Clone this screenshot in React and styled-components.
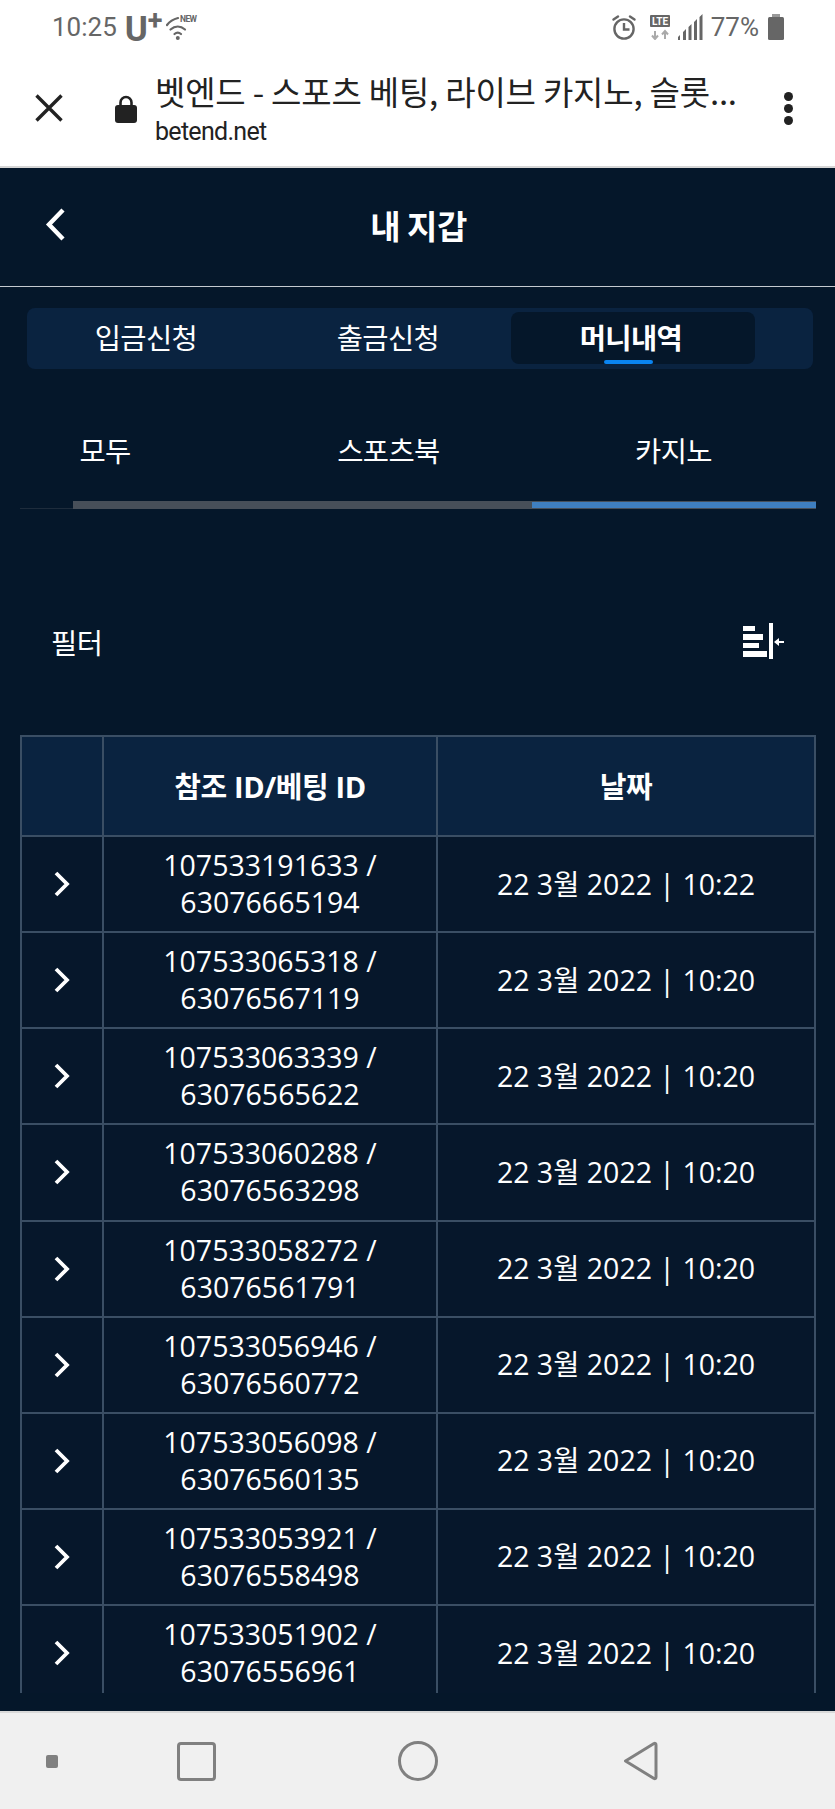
import React from 'react';
import styled, { createGlobalStyle } from 'styled-components';

const Global = createGlobalStyle`
  html, body {
    margin: 0;
    padding: 0;
    background: #05172a;
  }
  * {
    box-sizing: border-box;
  }
`;

const KR = `"Noto Sans CJK KR", "Noto Sans", sans-serif`;
const BODY = `"Open Sans", "Noto Sans CJK KR", sans-serif`;

const Page = styled.div`
  width: 835px;
  height: 1809px;
  display: flex;
  flex-direction: column;
  overflow: hidden;
  background: #05172a;
  color: #fff;
  font-family: ${KR};
`;

const StatusBar = styled.div`
  height: 50px;
  flex: none;
  display: flex;
  justify-content: space-between;
  align-items: center;
  padding: 3px 51px 0 52px;
  background: #fff;
  color: #666;
  font-family: Roboto, sans-serif;
  font-size: 26px;
`;

const StatusGroup = styled.div`
  display: flex;
  align-items: center;
  height: 100%;
`;

const Carrier = styled.span`
  font-size: 35px;
  font-weight: 700;
  margin-left: 8px;
  line-height: 1;
  margin-top: 6px;
`;

const CarrierPlus = styled.sup`
  font-size: 27px;
  line-height: 0;
  vertical-align: 11px;
`;

const BrowserBar = styled.div`
  height: 118px;
  flex: none;
  display: flex;
  align-items: center;
  padding: 0 42px 0 35px;
  background: #fff;
  border-bottom: 2px solid #d6d6d6;
  color: #222;
`;

const PageInfo = styled.div`
  flex: 1;
  min-width: 0;
  margin-left: 18px;
`;

const PageTitle = styled.div`
  font-size: 33px;
  line-height: 40px;
  white-space: nowrap;
  letter-spacing: -0.2px;
`;

const PageUrl = styled.div`
  font-family: Roboto, sans-serif;
  font-size: 25px;
  line-height: 28px;
  letter-spacing: -0.7px;
  margin-top: 7px;
`;

const Dots = styled.div`
  display: flex;
  flex-direction: column;
  gap: 3px;
`;

const Dot = styled.span`
  width: 9px;
  height: 9px;
  border-radius: 50%;
  background: #222;
`;

const Content = styled.main`
  flex: 1;
  min-height: 0;
  display: flex;
  flex-direction: column;
  padding: 0 19px 0 20px;
`;

const Header = styled.header`
  height: 119px;
  flex: none;
  margin: 0 -19px 0 -20px;
  padding: 0 25px 5px 45px;
  display: grid;
  grid-template-columns: 20px 1fr 20px;
  align-items: center;
  border-bottom: 1px solid #c5cad0;
`;

const HeaderTitle = styled.h1`
  margin: 0;
  text-align: center;
  font-size: 33px;
  font-weight: 700;
  letter-spacing: -0.5px;
  padding-right: 18px;
`;

const TopTabs = styled.nav`
  height: 61px;
  margin: 21px 3px 0 7px;
  padding: 4px 52px 5px 0;
  display: grid;
  grid-template-columns: 242px 242px 244px;
  background: #0a2340;
  border-radius: 8px;
  flex: none;
`;

const TopTab = styled.div`
  position: relative;
  display: flex;
  align-items: center;
  justify-content: center;
  font-size: 28.5px;
  font-weight: ${({ $active }) => ($active ? 700 : 400)};
  letter-spacing: -0.6px;
  border-radius: 8px;
  background: ${({ $active }) => ($active ? '#05172a' : 'transparent')};
  padding: 0 4px 4px 0;

  &::after {
    content: ${({ $active }) => ($active ? "''" : 'none')};
    position: absolute;
    left: 93px;
    bottom: 0;
    width: 49px;
    height: 4px;
    border-radius: 2px;
    background: #0a84f0;
  }
`;

const SubTabs = styled.div`
  height: 140px;
  flex: none;
  position: relative;
  display: grid;
  grid-template-columns: 170px 397px 173px;
  align-items: center;
  justify-items: center;
  border-bottom: 1px solid #1e2c3c;
  padding-top: 21px;
`;

const SubTab = styled.div`
  font-size: 28.5px;
  letter-spacing: -0.6px;
`;

const SubTrack = styled.div`
  position: absolute;
  left: 53px;
  right: 0;
  bottom: -1px;
  height: 8px;
  background: #474f59;
`;

const SubThumb = styled.div`
  position: absolute;
  right: 0;
  top: 1px;
  bottom: 1px;
  width: 284px;
  background: #3f7fc0;
`;

const FilterRow = styled.div`
  height: 226px;
  flex: none;
  display: flex;
  justify-content: space-between;
  align-items: center;
  padding: 38px 32px 0 31px;
  font-size: 28.5px;
  letter-spacing: -0.5px;
`;

const TableClip = styled.div`
  height: 958px;
  flex: none;
  overflow: hidden;
  border-left: 2px solid #3a4e64;
  border-right: 2px solid #3a4e64;
  border-top: 2px solid #3a4e64;
`;

const Row = styled.div`
  display: grid;
  grid-template-columns: 80px 334px 1fr;
  height: ${({ $head }) => ($head ? '100px' : '96.125px')};
  background: ${({ $head }) => ($head ? '#0a2340' : '#06172b')};
  border-bottom: 2px solid #3a4e64;
  font-family: ${BODY};
  font-weight: ${({ $head }) => ($head ? 700 : 400)};
  font-size: ${({ $head }) => ($head ? '29px' : '28.5px')};
  letter-spacing: ${({ $head }) => ($head ? '-0.4px' : '0')};
`;

const Cell = styled.div`
  display: flex;
  align-items: center;
  justify-content: center;
  text-align: center;
  line-height: 37px;
  min-width: 0;
  border-left: ${({ $first }) => ($first ? 'none' : '2px solid #3a4e64')};
`;

const NavBar = styled.div`
  height: 98px;
  flex: none;
  margin-top: auto;
  border-top: 2px solid #d9d9d9;
  background: #f0f0f0;
  display: grid;
  grid-template-columns: 46px 12px 119px 39px 182px 40px 185px 35px;
  align-items: center;
`;

const NavDot = styled.span`
  grid-column: 2;
  height: 13px;
  border-radius: 2px;
  background: #808080;
`;

const NavSquare = styled.span`
  grid-column: 4;
  height: 39px;
  border: 3px solid #808080;
  border-radius: 4px;
`;

const NavCircle = styled.span`
  grid-column: 6;
  height: 40px;
  border: 3px solid #808080;
  border-radius: 50%;
`;

const NavBack = styled.svg`
  grid-column: 8;
  display: block;
`;

const Alarm = () => (
  <svg width="24" height="26" viewBox="0 0 24 26" fill="none" stroke="#666" strokeWidth="2.4">
    <circle cx="12" cy="15" r="9.6" />
    <path d="M12 9v6.5h5.5" />
    <path d="M1.5 5.5 6 2.5M22.5 5.5 18 2.5" strokeLinecap="round" />
  </svg>
);

const Lte = () => (
  <svg width="20" height="26" viewBox="0 0 20 26" style={{ marginLeft: 14 }}>
    <rect x="0" y="1" width="20" height="12" rx="1" fill="#666" />
    <text x="10" y="11" textAnchor="middle" fill="#fff" fontFamily="Roboto, sans-serif" fontWeight="700" fontSize="10">LTE</text>
    <path d="M5 25v-8M2 21.5l3 3.5 3-3.5M15 25v-8M12 20.5l3-3.5 3 3.5" fill="none" stroke="#aaa" strokeWidth="2" />
  </svg>
);

const Signal = () => (
  <svg width="25" height="26" viewBox="0 0 25 26" style={{ marginLeft: 8 }} fill="#666">
    <path d="M0 26v-3l2-2v5zM5 26v-8l3-3v11zM10.500 26V13l3-3v16zM16 26V8l3-3v21zM21.500 26V3l3-3v26z" />
  </svg>
);

const Battery = () => (
  <svg width="16" height="26" viewBox="0 0 16 26" style={{ marginLeft: 9 }} fill="#666">
    <rect x="4" y="0" width="8" height="3" fill="#999" />
    <rect x="0" y="3" width="16" height="23" rx="1.500" />
  </svg>
);

const Wifi = () => (
  <svg width="32" height="26" viewBox="0 0 32 26" style={{ marginLeft: 3 }}>
    <g fill="none" stroke="#666" strokeWidth="2.2" strokeLinecap="round">
      <path d="M1 11C4 7 8 5 12 4" />
      <path d="M4.500 15.500c4.500-4 10-4 14.500 0" />
      <path d="M8.500 20c2-1.800 4.500-1.800 6.500 0" />
    </g>
    <circle cx="11.800" cy="24" r="2" fill="#666" />
    <text x="14" y="7.500" fill="#666" fontFamily="Roboto, sans-serif" fontWeight="700" fontSize="8.500" textLength="17">NEW</text>
  </svg>
);

const CloseIcon = () => (
  <svg width="28" height="28" viewBox="0 0 28 28" fill="none" stroke="#222" strokeWidth="3.400">
    <path d="M1.500 1.500l25 25M26.500 1.500l-25 25" />
  </svg>
);

const LockIcon = () => (
  <svg width="22" height="28" viewBox="0 0 22 28" style={{ marginLeft: 52, marginTop: 2, flex: 'none' }}>
    <path d="M5.500 11V7.500a5.500 5.500 0 0 1 11 0V11" fill="none" stroke="#222" strokeWidth="2.600" />
    <rect x="0" y="10" width="22" height="18" rx="3" fill="#222" />
  </svg>
);

const BackIcon = () => (
  <svg width="20" height="33" viewBox="0 0 20 33" fill="none" stroke="#fff" strokeWidth="4.400">
    <path d="M18 2 4 16.500 18 31" />
  </svg>
);

const ChevronIcon = () => (
  <svg width="16" height="26" viewBox="0 0 16 26" fill="none" stroke="#fff" strokeWidth="3.800">
    <path d="M2 2l11 11L2 24" />
  </svg>
);

const FilterIcon = () => (
  <svg width="41" height="36" viewBox="0 0 41 36" fill="#fff">
    <rect x="0" y="3" width="12" height="5" />
    <rect x="0" y="11" width="20" height="6" />
    <rect x="0" y="20" width="16" height="5" />
    <rect x="0" y="28" width="24" height="6" />
    <rect x="26" y="0" width="4" height="36" />
    <path d="M31 19l5-4v3h5v2h-5v3z" />
  </svg>
);

const rows = [
  ['107533191633', '63076665194', '10:22'],
  ['107533065318', '63076567119', '10:20'],
  ['107533063339', '63076565622', '10:20'],
  ['107533060288', '63076563298', '10:20'],
  ['107533058272', '63076561791', '10:20'],
  ['107533056946', '63076560772', '10:20'],
  ['107533056098', '63076560135', '10:20'],
  ['107533053921', '63076558498', '10:20'],
  ['107533051902', '63076556961', '10:20'],
];

export default function App() {
  return (
    <Page>
      <Global />
      <StatusBar>
        <StatusGroup>
          <span>10:25</span>
          <Carrier>U<CarrierPlus>+</CarrierPlus></Carrier>
          <Wifi />
        </StatusGroup>
        <StatusGroup>
          <Alarm />
          <Lte />
          <Signal />
          <span style={{ marginLeft: 8 }}>77%</span>
          <Battery />
        </StatusGroup>
      </StatusBar>
      <BrowserBar>
        <CloseIcon />
        <LockIcon />
        <PageInfo>
          <PageTitle>벳엔드 - 스포츠 베팅, 라이브 카지노, 슬롯...</PageTitle>
          <PageUrl>betend.net</PageUrl>
        </PageInfo>
        <Dots><Dot /><Dot /><Dot /></Dots>
      </BrowserBar>
      <Content>
        <Header>
          <BackIcon />
          <HeaderTitle>내 지갑</HeaderTitle>
        </Header>
        <TopTabs>
          <TopTab>입금신청</TopTab>
          <TopTab>출금신청</TopTab>
          <TopTab $active>머니내역</TopTab>
        </TopTabs>
        <SubTabs>
          <SubTab>모두</SubTab>
          <SubTab>스포츠북</SubTab>
          <SubTab>카지노</SubTab>
          <SubTrack><SubThumb /></SubTrack>
        </SubTabs>
        <FilterRow>
          <span>필터</span>
          <FilterIcon />
        </FilterRow>
        <TableClip>
          <Row $head>
            <Cell $first />
            <Cell>참조 ID/베팅 ID</Cell>
            <Cell>날짜</Cell>
          </Row>
          {rows.map(([ref, bet, time]) => (
            <Row key={ref}>
              <Cell $first><ChevronIcon /></Cell>
              <Cell>{ref} /<br />{bet}</Cell>
              <Cell>22 3월 2022 | {time}</Cell>
            </Row>
          ))}
        </TableClip>
      </Content>
      <NavBar>
        <NavDot />
        <NavSquare />
        <NavCircle />
        <NavBack width="35" height="40" viewBox="0 0 35 40" fill="none" stroke="#808080" strokeWidth="3" strokeLinejoin="round">
          <path d="M31 2.500 2.500 20 31 37.500c1 .5 2 0 2-1.500V4c0-1.500-1-2-2-1.500z" />
        </NavBack>
      </NavBar>
    </Page>
  );
}
